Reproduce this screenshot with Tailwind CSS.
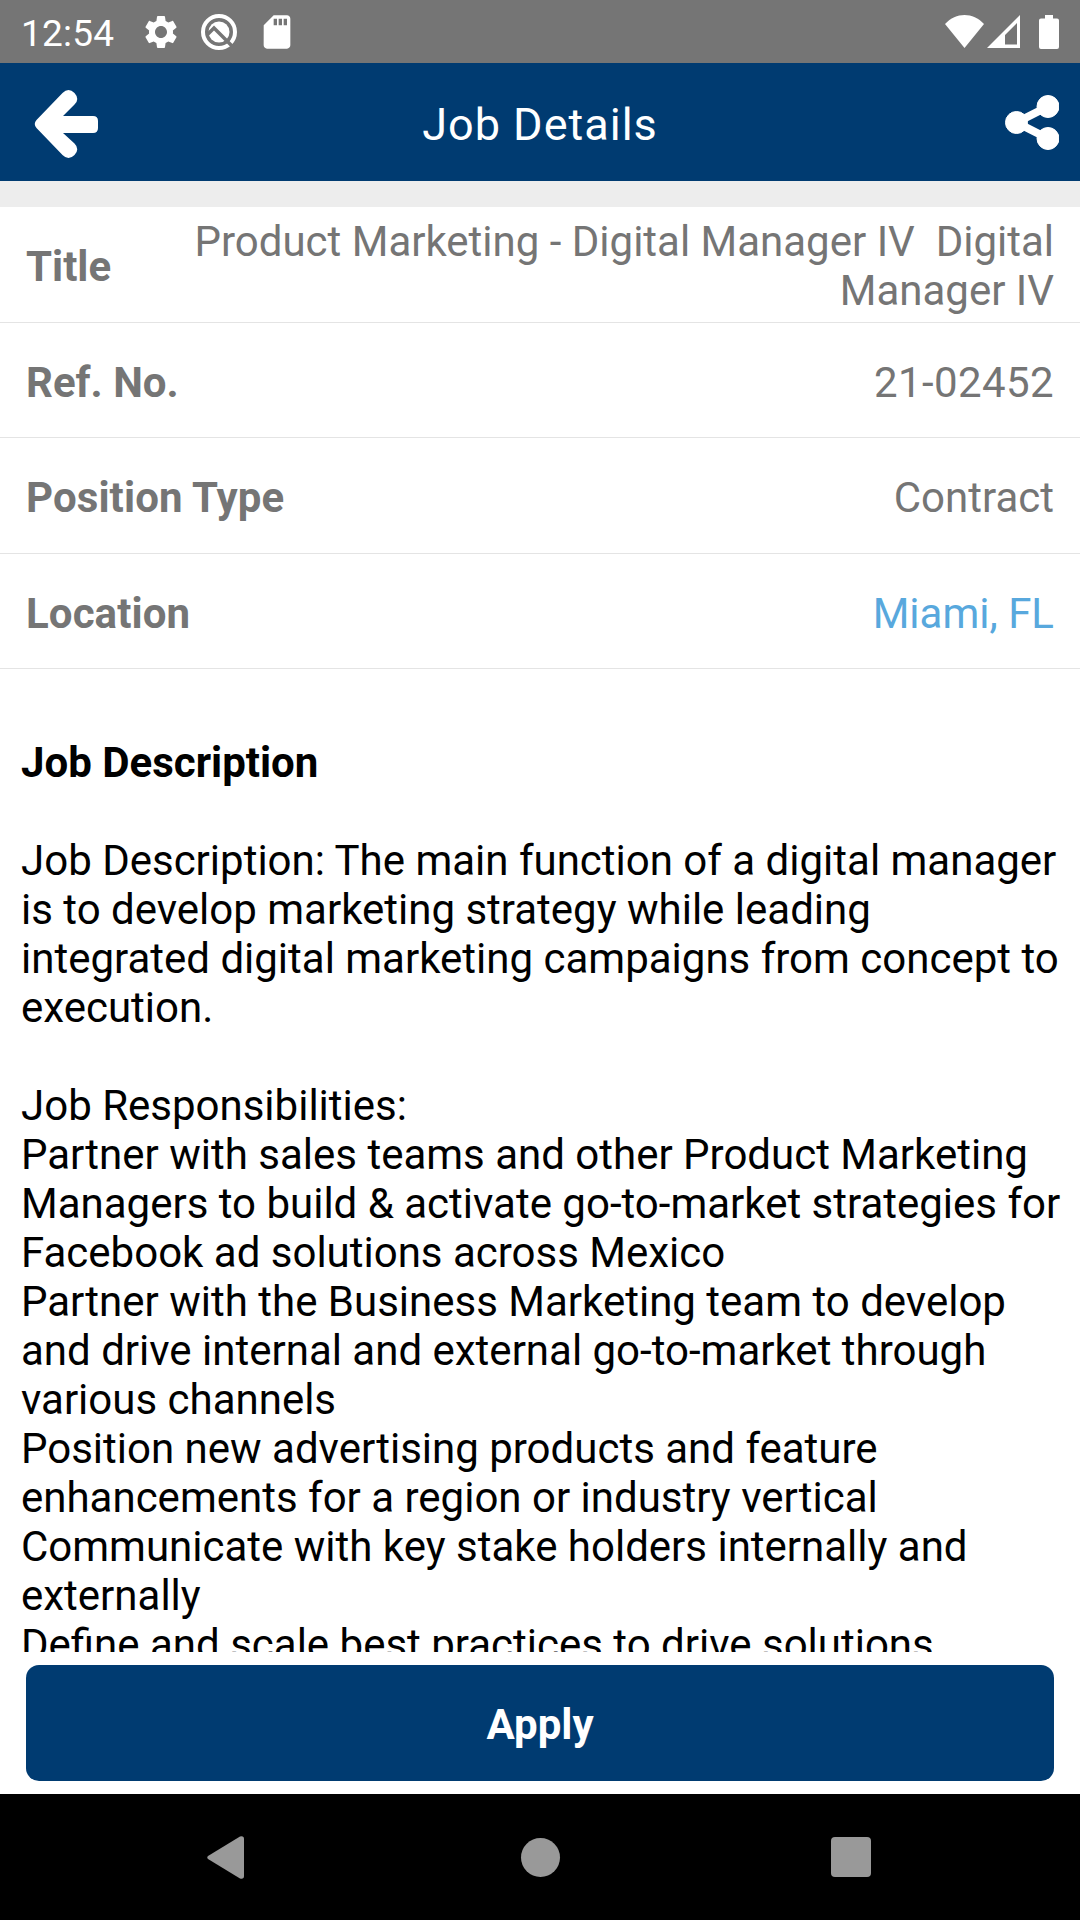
<!DOCTYPE html>
<html lang="en">
  <head>
    <meta charset="UTF-8" />
    <meta name="viewport" content="width=device-width, initial-scale=1.0" />
    <title>Job Details</title>
    <script src="https://cdn.jsdelivr.net/npm/@tailwindcss/browser@4"></script>
  </head>
  <body class="bg-white font-['Roboto',sans-serif]">
    <div class="w-[1080px] h-[1920px] flex flex-col overflow-hidden text-[42px] leading-[49px]">
      <!-- Status bar -->
      <div class="h-[63px] shrink-0 bg-[#757575] flex items-center px-[21px] text-white">
        <span class="w-[120px] text-[37px] leading-[63px] pt-[3px] tracking-[0.2px]">12:54</span>
        <svg class="w-10 h-10" viewBox="0 0 24 24" fill="currentColor"><path d="M19.14 12.94c.04-.3.06-.61.06-.94 0-.32-.02-.64-.07-.94l2.03-1.58c.18-.14.23-.41.12-.61l-1.92-3.32c-.12-.22-.37-.29-.59-.22l-2.39.96c-.5-.38-1.03-.7-1.62-.94l-.36-2.54c-.04-.24-.24-.41-.48-.41h-3.84c-.24 0-.43.17-.47.41l-.36 2.54c-.59.24-1.13.57-1.62.94l-2.39-.96c-.22-.08-.47 0-.59.22L2.74 8.87c-.12.21-.08.47.12.61l2.03 1.58c-.05.3-.09.63-.09.94s.02.64.07.94l-2.03 1.58c-.18.14-.23.41-.12.61l1.92 3.32c.12.22.37.29.59.22l2.39-.96c.5.38 1.03.7 1.62.94l.36 2.54c.05.24.24.41.48.41h3.84c.24 0 .44-.17.47-.41l.36-2.54c.59-.24 1.13-.56 1.62-.94l2.39.96c.22.08.47 0 .59-.22l1.92-3.32c.12-.22.07-.47-.12-.61l-2.01-1.58zM12 15.6c-1.98 0-3.6-1.62-3.6-3.6s1.62-3.6 3.6-3.6 3.6 1.62 3.6 3.6-1.62 3.6-3.6 3.6z" /></svg>
        <svg class="w-10 h-10 ml-[18px]" viewBox="0 0 40 40" fill="none">
          <circle cx="20" cy="20" r="16" stroke="#fff" stroke-width="4" />
          <circle cx="20" cy="20" r="10.5" fill="#fff" />
          <path d="M8.5 22.5L15 16L34 35" stroke="#757575" stroke-width="3.5" />
        </svg>
        <svg class="w-10 h-10 ml-[18px]" viewBox="0 0 24 24" fill="currentColor"><path d="M18 2h-8L4.02 8 4 20c0 1.1.9 2 2 2h12c1.1 0 2-.9 2-2V4c0-1.1-.9-2-2-2zm-6 6h-2V4h2v4zm3 0h-2V4h2v4zm3 0h-2V4h2v4z" /></svg>
        <div class="ml-auto flex items-center">
          <svg class="w-[39px] h-[33px] mr-[3px]" viewBox="0 0 39 33" fill="currentColor"><path d="M0 9C11-3 28-3 39 9L19.5 33z" /></svg>
          <svg class="w-[33px] h-[33px] mr-[19px]" viewBox="0 0 33 33" fill="currentColor"><path fill-rule="evenodd" d="M33 0V33H0zM30 8L18 20V29.5H30z" /></svg>
          <svg class="w-5 h-[34px]" viewBox="0 0 20 34" fill="currentColor"><path d="M6 0h8v3.5h4a2 2 0 0 1 2 2V32a2 2 0 0 1-2 2H2a2 2 0 0 1-2-2V5.5a2 2 0 0 1 2-2h4z" /></svg>
        </div>
      </div>

      <!-- App bar -->
      <div class="h-[118px] shrink-0 bg-[#003b71] flex items-center pl-[34px] pr-[21px] text-white">
        <div class="w-[160px]">
          <svg class="w-[65px] h-[70px] mt-1" viewBox="0 0 65 70" fill="currentColor"><path d="M2.5 31L28.5 4Q34.5-2 40.5 4Q46 10 40.5 15.5L29 27H59Q64 27 64 32V39Q64 44 59 44H29L40.5 54.5Q46 60 40.5 66Q34.5 72 28.5 66L2.5 39Q-1 35 2.5 31z" /></svg>
        </div>
        <h1 class="flex-1 pt-[5px] text-center text-[45px] tracking-[1px]">Job Details</h1>
        <div class="w-[173px] flex justify-end">
          <svg class="w-[54px] h-[55px]" viewBox="0 0 54 55" fill="currentColor" stroke="currentColor"><path d="M43 11.5L11.5 27.5L43 43.5" fill="none" stroke-width="8" /><circle cx="11.5" cy="27.5" r="11" /><circle cx="43" cy="11.5" r="11" /><circle cx="43" cy="43.5" r="11" /></svg>
        </div>
      </div>
      <div class="h-[26px] shrink-0 bg-[#ededed]"></div>

      <!-- Job summary -->
      <div class="shrink-0 text-[#757575]">
        <div class="h-[116px] px-[26px] pt-1 flex items-center justify-between border-b border-[#e4e4e4]">
          <span class="font-bold">Title</span>
          <span class="mb-px text-right whitespace-pre">Product Marketing - Digital Manager IV  Digital<br />Manager IV</span>
        </div>
        <div class="h-[115px] px-[26px] pt-1 flex items-center justify-between border-b border-[#e4e4e4]">
          <span class="font-bold">Ref. No.</span>
          <span class="tracking-[0.4px]">21-02452</span>
        </div>
        <div class="h-[116px] px-[26px] pt-1 flex items-center justify-between border-b border-[#e4e4e4]">
          <span class="font-bold tracking-[0.1px]">Position Type</span>
          <span>Contract</span>
        </div>
        <div class="h-[115px] px-[26px] pt-1 flex items-center justify-between border-b border-[#e4e4e4]">
          <span class="font-bold tracking-[0.1px]">Location</span>
          <span class="text-[#58a8dd]">Miami, FL</span>
        </div>
      </div>

      <!-- Description, cut off above the button -->
      <div class="h-[983px] shrink-0 overflow-hidden pt-[69px] pl-[21px] whitespace-nowrap text-black">
        <h2 class="font-bold mb-[49px]">Job Description</h2>
        <p class="mb-[49px]">
          Job Description: The main function of a digital manager<br />
          is to develop marketing strategy while leading<br />
          integrated digital marketing campaigns from concept to<br />
          execution.
        </p>
        <p>Job Responsibilities:</p>
        <p>Partner with sales teams and other Product Marketing<br />Managers to build &amp; activate go-to-market strategies for<br />Facebook ad solutions across Mexico</p>
        <p>Partner with the Business Marketing team to develop<br />and drive internal and external go-to-market through<br />various channels</p>
        <p>Position new advertising products and feature<br />enhancements for a region or industry vertical</p>
        <p>Communicate with key stake holders internally and<br />externally</p>
        <p>Define and scale best practices to drive solutions</p>
      </div>

      <div class="h-[142px] shrink-0 px-[26px] py-[13px]">
        <button class="w-full h-[116px] pt-[3px] rounded-[13px] bg-[#003b71] text-white font-bold">Apply</button>
      </div>

      <!-- Navigation bar -->
      <div class="h-[126px] shrink-0 bg-black flex items-center pl-[207px]">
        <svg class="w-[37px] h-[43px]" viewBox="0 0 37 43" fill="#999"><path d="M1 20L33 .5Q37-.5 37 3V40Q37 43.5 33 42.5L1 23Q-.5 21.5 1 20z" /></svg>
        <div class="w-[39px] h-[39px] ml-[277px] rounded-full bg-[#999]"></div>
        <div class="w-10 h-10 ml-[271px] rounded-[4px] bg-[#999]"></div>
      </div>
    </div>
  </body>
</html>
